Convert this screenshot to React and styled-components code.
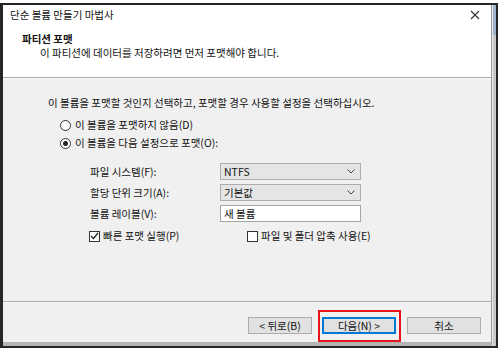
import React from "react";
import styled, { createGlobalStyle } from "styled-components";

const Global = createGlobalStyle`
  html, body { margin: 0; padding: 0; background: #fff; }
  body { font-family: "Noto Sans CJK KR", "Noto Sans", sans-serif; font-size: 10.5px; color: #111; }
  * { box-sizing: border-box; }
`;

const Window = styled.div`
  margin-top: 3px;
  width: 498px;
  height: 345px;
  border-left: 3px solid #262626;
  border-top: 2px solid #262626;
  border-right: 2px solid #262626;
  border-bottom: 2px solid #262626;
  display: flex;
  background: #f0f0f0;
`;

const Main = styled.div`
  flex: 1;
  display: flex;
  flex-direction: column;
  border-right: 1px solid #9a9a9a;
  border-bottom: 4px solid #b4b4b4;
`;

const Strip = styled.div`
  width: 4px;
  background: linear-gradient(#9fb3d1 0, #9fb3d1 30px, #c8c8c8 30px, #c8c8c8 100%);
  border-left: 1px solid #e8e8e8;
`;

const Header = styled.div`
  background: #fff;
  height: 72px;
  display: flex;
  flex-direction: column;
`;

const TitleRow = styled.div`
  height: 20px;
  display: flex;
  align-items: center;
  justify-content: space-between;
  padding: 0 8px 0 7px;
  line-height: 12px;
`;

const Close = styled.svg`
  width: 10px;
  height: 10px;
  margin-right: 3px;
`;

const HeadTitle = styled.div`
  margin: 8px 0 0 19px;
  height: 12px;
  line-height: 12px;
  font-weight: 700;
`;

const HeadSub = styled.div`
  margin: 2px 0 0 37px;
  height: 12px;
  line-height: 12px;
`;

const Sep = styled.div`
  height: 2px;
  border-top: 1px solid #a8a8a8;
  border-bottom: 1px solid #fafafa;
`;

const Body = styled.div`
  flex: 1;
  padding: 18px 0 0 45px;
  display: flex;
  flex-direction: column;
`;

const Line = styled.div`
  line-height: 12px;
  height: 12px;
`;

const RadioRow = styled.label`
  display: flex;
  align-items: center;
  height: 12px;
  line-height: 12px;
  margin-left: 12px;
  margin-top: ${(p) => p.$mt}px;
  gap: 4px;
`;

const RadioDot = styled.span`
  width: 11px;
  height: 11px;
  border-radius: 50%;
  border: 1px solid #333;
  background: #fff;
  display: flex;
  align-items: center;
  justify-content: center;
  &::after {
    content: "";
    width: 5px;
    height: 5px;
    border-radius: 50%;
    background: ${(p) => (p.$on ? "#222" : "transparent")};
  }
`;

const Form = styled.div`
  margin: 14px 0 0 42px;
  display: grid;
  grid-template-columns: 130px 141px;
  row-gap: 4px;
  align-items: center;
`;

const Label = styled.div`
  line-height: 12px;
`;

const Select = styled.div`
  height: 17px;
  background: #e5e5e5;
  border: 1px solid #adadad;
  display: flex;
  align-items: center;
  justify-content: space-between;
  padding: 0 5px 0 3px;
  line-height: 12px;
`;

const TextInput = styled.div`
  height: 17px;
  background: #fff;
  border: 1px solid #a5a5a5;
  display: flex;
  align-items: center;
  padding: 0 3px;
  line-height: 12px;
`;

const CheckRow = styled.div`
  display: flex;
  margin: 8px 0 0 41px;
  height: 12px;
`;

const Check = styled.label`
  display: flex;
  align-items: center;
  gap: 3px;
  line-height: 12px;
  width: ${(p) => p.$w || "auto"};
`;

const Box = styled.span`
  width: 11px;
  height: 11px;
  border: 1px solid #333;
  background: #fff;
  display: flex;
  align-items: center;
  justify-content: center;
`;

const Footer = styled.div`
  height: 39px;
  display: flex;
  justify-content: flex-end;
  align-items: flex-start;
  padding: 7px 10px 0 0;
`;

const Button = styled.div`
  width: ${(p) => p.$w}px;
  height: 17px;
  margin-top: ${(p) => p.$mt || 0}px;
  margin-left: ${(p) => p.$ml || 0}px;
  background: #e1e1e1;
  border: 1px solid ${(p) => (p.$focus ? "#0078d7" : "#adadad")};
  box-shadow: ${(p) => (p.$focus ? "inset 0 0 0 1px #0078d7" : "none")};
  display: flex;
  align-items: center;
  justify-content: center;
  line-height: 12px;
`;

const Highlight = styled.div`
  margin-left: 6px;
  border: 2px solid #e8141b;
  padding: 5px 3px 7px 2px;
  height: 32px;
`;

const Chevron = () => (
  <svg width="8" height="5" viewBox="0 0 8 5">
    <path d="M0.5 0.5 L4 4 L7.5 0.5" fill="none" stroke="#444" strokeWidth="1" />
  </svg>
);

export default function App() {
  return (
    <>
      <Global />
      <Window>
        <Main>
          <Header>
            <TitleRow>
              <span>단순 볼륨 만들기 마법사</span>
              <Close viewBox="0 0 10 10">
                <path d="M1 1 L9 9 M9 1 L1 9" stroke="#333" strokeWidth="1.1" />
              </Close>
            </TitleRow>
            <HeadTitle>파티션 포맷</HeadTitle>
            <HeadSub>이 파티션에 데이터를 저장하려면 먼저 포맷해야 합니다.</HeadSub>
          </Header>
          <Sep />
          <Body>
            <Line>이 볼륨을 포맷할 것인지 선택하고, 포맷할 경우 사용할 설정을 선택하십시오.</Line>
            <RadioRow $mt={10}>
              <RadioDot />
              이 볼륨을 포맷하지 않음(D)
            </RadioRow>
            <RadioRow $mt={6}>
              <RadioDot $on />
              이 볼륨을 다음 설정으로 포맷(O):
            </RadioRow>
            <Form>
              <Label>파일 시스템(F):</Label>
              <Select>
                <span>NTFS</span>
                <Chevron />
              </Select>
              <Label>할당 단위 크기(A):</Label>
              <Select>
                <span>기본값</span>
                <Chevron />
              </Select>
              <Label>볼륨 레이블(V):</Label>
              <TextInput>새 볼륨</TextInput>
            </Form>
            <CheckRow>
              <Check $w="158px">
                <Box>
                  <svg width="9" height="8" viewBox="0 0 9 8">
                    <path d="M1 4 L3.5 6.5 L8 1" fill="none" stroke="#222" strokeWidth="1.2" />
                  </svg>
                </Box>
                빠른 포맷 실행(P)
              </Check>
              <Check>
                <Box />
                파일 및 폴더 압축 사용(E)
              </Check>
            </CheckRow>
          </Body>
          <Sep />
          <Footer>
            <Button $w={64} $mt={7}>&lt; 뒤로(B)</Button>
            <Highlight>
              <Button $w={74} $focus>다음(N) &gt;</Button>
            </Highlight>
            <Button $w={74} $mt={7} $ml={6}>취소</Button>
          </Footer>
        </Main>
        <Strip />
      </Window>
    </>
  );
}
